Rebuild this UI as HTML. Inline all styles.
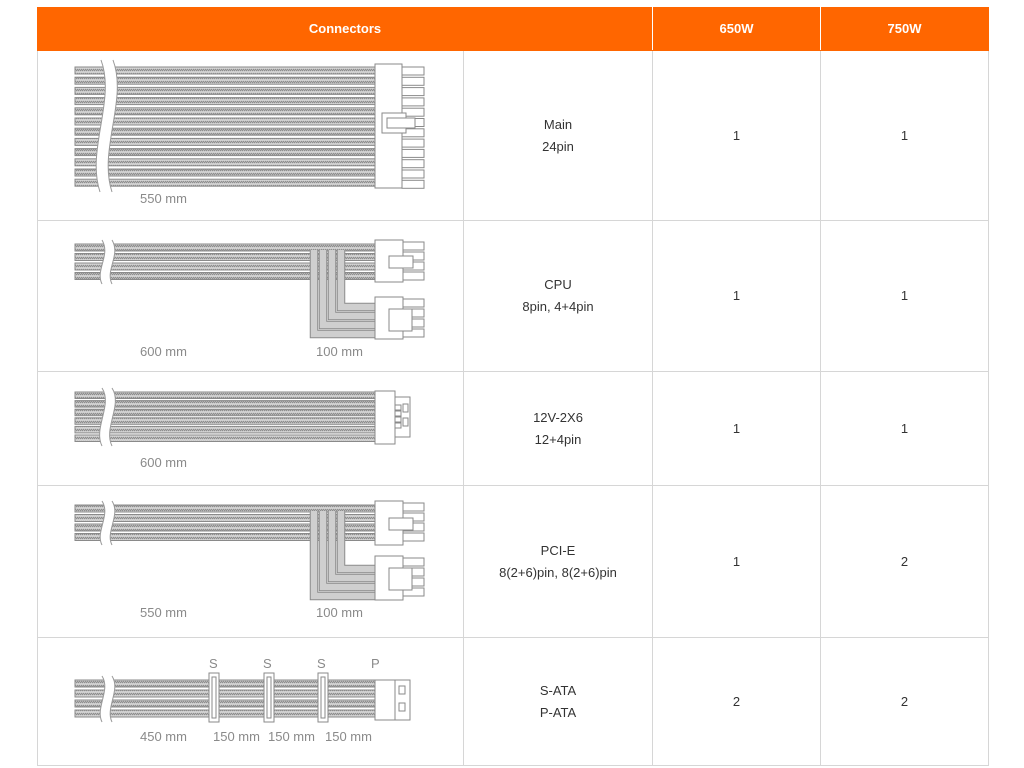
<!DOCTYPE html>
<html><head><meta charset="utf-8"><style>
body{margin:0;background:#fff;font-family:"Liberation Sans",sans-serif;}
table{position:absolute;left:37px;top:7px;border-collapse:collapse;width:952px;}
td,th{border:1px solid #d6d6d6;text-align:center;font-size:13px;color:#333;line-height:22px;padding:0}
th{background:#ff6600;color:#fff;font-weight:bold;height:42px;border:1px solid #ff6600;border-right:1px solid #fff}
th:last-child{border-right-color:#ff6600}
svg{position:absolute;left:0;top:0}
.l{fill:#8a8a8a;font-size:13px;font-family:"Liberation Sans",sans-serif}
</style></head><body>
<table>
<tr><th colspan="2">Connectors</th><th style="width:167px">650W</th><th>750W</th></tr>
<tr style="height:170px"><td style="width:425px"></td><td style="width:188px">Main<br>24pin</td><td>1</td><td>1</td></tr>
<tr style="height:151px"><td></td><td>CPU<br>8pin, 4+4pin</td><td>1</td><td>1</td></tr>
<tr style="height:114px"><td></td><td>12V-2X6<br>12+4pin</td><td>1</td><td>1</td></tr>
<tr style="height:152px"><td></td><td>PCI-E<br>8(2+6)pin, 8(2+6)pin</td><td>1</td><td>2</td></tr>
<tr style="height:128px"><td></td><td>S-ATA<br>P-ATA</td><td>2</td><td>2</td></tr>
</table>
<svg width="1024" height="768" fill="none" stroke="#8a8a8a" stroke-width="1">
<defs>
<pattern id="br" width="4" height="4" patternUnits="userSpaceOnUse"><rect width="4" height="4" fill="#d4d4d4" stroke="none"/><path d="M0,3 L2,1 M2,3 L4,1" stroke="#8c8c8c" stroke-width="1.2"/></pattern>
</defs>
<g fill="url(#br)">
<rect x="75" y="67" width="302" height="7"/><rect x="75" y="77.2" width="302" height="7"/><rect x="75" y="87.4" width="302" height="7"/><rect x="75" y="97.6" width="302" height="7"/><rect x="75" y="107.8" width="302" height="7"/><rect x="75" y="118" width="302" height="7"/><rect x="75" y="128.2" width="302" height="7"/><rect x="75" y="138.4" width="302" height="7"/><rect x="75" y="148.6" width="302" height="7"/><rect x="75" y="158.8" width="302" height="7"/><rect x="75" y="169" width="302" height="7"/><rect x="75" y="179.2" width="302" height="7"/>
<rect x="75" y="244" width="302" height="7"/><rect x="75" y="253.5" width="302" height="7"/><rect x="75" y="263" width="302" height="7"/><rect x="75" y="272.5" width="302" height="7"/>
<rect x="75" y="392" width="302" height="6.5"/><rect x="75" y="400.6" width="302" height="6.5"/><rect x="75" y="409.2" width="302" height="6.5"/><rect x="75" y="417.8" width="302" height="6.5"/><rect x="75" y="426.4" width="302" height="6.5"/><rect x="75" y="435" width="302" height="6.5"/>
<rect x="75" y="505" width="302" height="7"/><rect x="75" y="514.5" width="302" height="7"/><rect x="75" y="524" width="302" height="7"/><rect x="75" y="533.5" width="302" height="7"/>
<rect x="75" y="680" width="302" height="7"/><rect x="75" y="690" width="302" height="7"/><rect x="75" y="700" width="302" height="7"/><rect x="75" y="710" width="302" height="7"/>
</g>
<g stroke-linejoin="miter">
<path d="M314,250V334H377M323,250V325H377M332,250V316H377M341,250V307H377" stroke="#8a8a8a" stroke-width="8.5"/>
<path d="M314,250V334H377M323,250V325H377M332,250V316H377M341,250V307H377" stroke="#cfcfcf" stroke-width="6.5"/>
<path d="M314,511V596H377M323,511V587H377M332,511V578H377M341,511V569H377" stroke="#8a8a8a" stroke-width="8.5"/>
<path d="M314,511V596H377M323,511V587H377M332,511V578H377M341,511V569H377" stroke="#cfcfcf" stroke-width="6.5"/>
</g>
<g>
<path d="M107,60C122,100 92,150 106,192" stroke="#fff" stroke-width="12"/>
<path d="M101,60C116,100 86,150 100,192M113,60C128,100 98,150 112,192" stroke="#999"/>
<path d="M107,240C116,255 100,270 107,284" stroke="#fff" stroke-width="10"/>
<path d="M102,240C111,255 95,270 102,284M112,240C121,255 105,270 112,284" stroke="#999"/>
<path d="M107,388C118,405 98,428 107,446" stroke="#fff" stroke-width="10"/>
<path d="M102,388C113,405 93,428 102,446M112,388C123,405 103,428 112,446" stroke="#999"/>
<path d="M107,501C116,515 100,532 107,545" stroke="#fff" stroke-width="10"/>
<path d="M102,501C111,515 95,532 102,545M112,501C121,515 105,532 112,545" stroke="#999"/>
<path d="M107,676C116,690 100,708 107,722" stroke="#fff" stroke-width="10"/>
<path d="M102,676C111,690 95,708 102,722M112,676C121,690 105,708 112,722" stroke="#999"/>
</g>
<g fill="#fff">
<rect x="375" y="64" width="27" height="124"/>
<rect x="402" y="67" width="22" height="8"/><rect x="402" y="77.3" width="22" height="8"/><rect x="402" y="87.6" width="22" height="8"/><rect x="402" y="97.9" width="22" height="8"/><rect x="402" y="108.2" width="22" height="8"/><rect x="402" y="118.5" width="22" height="8"/><rect x="402" y="128.8" width="22" height="8"/><rect x="402" y="139.1" width="22" height="8"/><rect x="402" y="149.4" width="22" height="8"/><rect x="402" y="159.7" width="22" height="8"/><rect x="402" y="170" width="22" height="8"/><rect x="402" y="180.3" width="22" height="8"/>
<rect x="382" y="113" width="24" height="20"/><rect x="387" y="118" width="28" height="10"/>
<rect x="375" y="240" width="28" height="42"/>
<rect x="403" y="242" width="21" height="8"/><rect x="403" y="252" width="21" height="8"/><rect x="403" y="262" width="21" height="8"/><rect x="403" y="272" width="21" height="8"/>
<rect x="389" y="256" width="24" height="12"/>
<rect x="375" y="297" width="28" height="42"/>
<rect x="403" y="299" width="21" height="8"/><rect x="403" y="309" width="21" height="8"/><rect x="403" y="319" width="21" height="8"/><rect x="403" y="329" width="21" height="8"/>
<rect x="389" y="309" width="23" height="22"/>
<rect x="375" y="391" width="20" height="53"/>
<rect x="395" y="397" width="15" height="40"/>
<rect x="395" y="405" width="6" height="5"/><rect x="395" y="411" width="6" height="5"/><rect x="395" y="417" width="6" height="5"/><rect x="395" y="423" width="6" height="5"/>
<rect x="403" y="404" width="5" height="8"/><rect x="403" y="418" width="5" height="8"/>
<rect x="375" y="501" width="28" height="44"/>
<rect x="403" y="503" width="21" height="8"/><rect x="403" y="513" width="21" height="8"/><rect x="403" y="523" width="21" height="8"/><rect x="403" y="533" width="21" height="8"/>
<rect x="389" y="518" width="24" height="12"/>
<rect x="375" y="556" width="28" height="44"/>
<rect x="403" y="558" width="21" height="8"/><rect x="403" y="568" width="21" height="8"/><rect x="403" y="578" width="21" height="8"/><rect x="403" y="588" width="21" height="8"/>
<rect x="389" y="568" width="23" height="22"/>
<rect x="209" y="673" width="10" height="49"/><rect x="212" y="677" width="4" height="41"/>
<rect x="264" y="673" width="10" height="49"/><rect x="267" y="677" width="4" height="41"/>
<rect x="318" y="673" width="10" height="49"/><rect x="321" y="677" width="4" height="41"/>
<rect x="375" y="680" width="35" height="40"/><path d="M395,680V720"/>
<rect x="399" y="686" width="6" height="8"/><rect x="399" y="703" width="6" height="8"/>
</g>
<g stroke="none">
<text class="l" x="140" y="203">550 mm</text>
<text class="l" x="140" y="356">600 mm</text><text class="l" x="316" y="356">100 mm</text>
<text class="l" x="140" y="467">600 mm</text>
<text class="l" x="140" y="617">550 mm</text><text class="l" x="316" y="617">100 mm</text>
<text class="l" x="140" y="741">450 mm</text><text class="l" x="213" y="741">150 mm</text><text class="l" x="268" y="741">150 mm</text><text class="l" x="325" y="741">150 mm</text>
<text class="l" x="209" y="668">S</text><text class="l" x="263" y="668">S</text><text class="l" x="317" y="668">S</text><text class="l" x="371" y="668">P</text>
</g>
</svg>
</body></html>
